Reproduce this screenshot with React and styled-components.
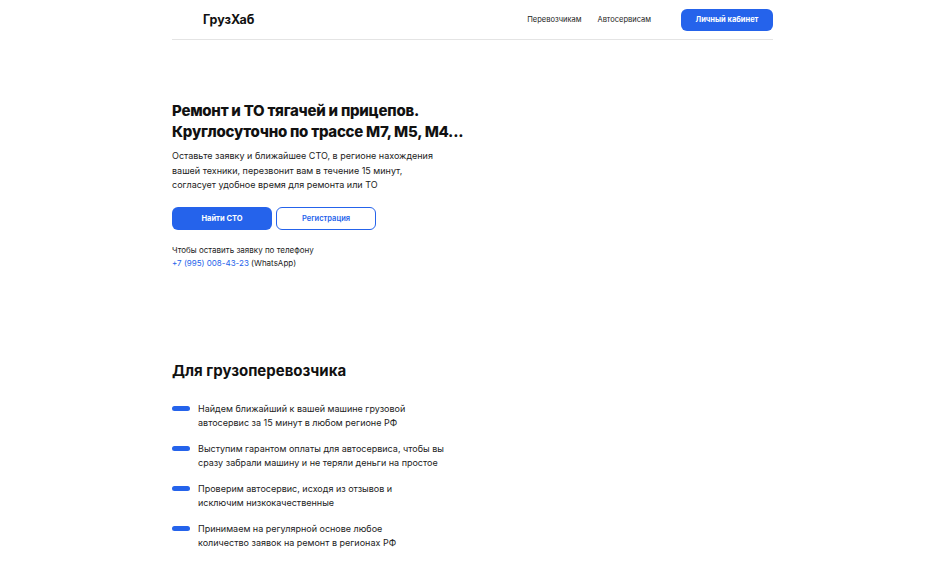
import styled, { createGlobalStyle } from 'styled-components';

const GlobalStyle = createGlobalStyle`
  * {
    box-sizing: border-box;
  }

  body {
    margin: 0;
    background: #fff;
    color: #111;
    font-family: Inter, "Noto Sans", sans-serif;
  }

  a {
    text-decoration: none;
  }
`;

const Page = styled.div`
  width: 601px;
  min-height: 1306px;
  margin-left: 172px;
`;

const Header = styled.header`
  height: 40px;
  display: flex;
  align-items: center;
  justify-content: space-between;
  border-bottom: 1px solid #e4e4e4;
`;

const Logo = styled.a`
  padding-left: 31px;
  font-weight: 700;
  font-size: 12.5px;
  color: #111;
`;

const Nav = styled.nav`
  display: flex;
  align-items: center;
`;

const NavLink = styled.a`
  margin-left: 16px;
  font-size: 7.5px;
  color: #222;
`;

const PrimaryButton = styled.a`
  display: flex;
  align-items: center;
  justify-content: center;
  width: ${({ $width }) => $width || 100}px;
  height: ${({ $height }) => $height || 23}px;
  margin-left: ${({ $offset }) => $offset || 0}px;
  border-radius: 6px;
  background: #2563eb;
  color: #fff;
  font-size: 7.5px;
  font-weight: 700;
`;

const OutlineButton = styled.a`
  display: flex;
  align-items: center;
  justify-content: center;
  width: 100px;
  height: 23px;
  border-radius: 6px;
  border: 1.5px solid #2563eb;
  color: #2563eb;
  font-size: 7.5px;
  font-weight: 600;
`;

const Hero = styled.section`
  padding-top: 60px;
`;

const Title = styled.h1`
  margin: 0;
  font-size: 15px;
  line-height: 21px;
  font-weight: 800;
  letter-spacing: -0.25px;
`;

const Lead = styled.p`
  margin: 7px 0 0;
  font-size: 9px;
  line-height: 14.5px;
  color: #222;
`;

const Actions = styled.div`
  display: flex;
  gap: 4px;
  margin-top: 14px;
`;

const Contact = styled.p`
  margin: 14px 0 0;
  font-size: 8px;
  line-height: 13px;
  color: #222;
`;

const Phone = styled.a`
  color: #2563eb;
`;

const Section = styled.section`
  padding-top: 91px;
`;

const SectionTitle = styled.h2`
  margin: 0;
  font-size: 15px;
  line-height: 20px;
  font-weight: 700;
`;

const List = styled.ul`
  list-style: none;
  margin: 21px 0 0;
  padding: 0;
  display: flex;
  flex-direction: column;
  gap: 12px;
`;

const Item = styled.li`
  display: flex;
  align-items: flex-start;
  gap: 8px;
  font-size: 9px;
  line-height: 14px;
  color: #222;
`;

const Dash = styled.span`
  flex: none;
  width: 18px;
  height: 5px;
  margin-top: 4.5px;
  border-radius: 3px;
  background: #2563eb;
`;

const carrierPoints = [
  ['Найдем ближайший к вашей машине грузовой', 'автосервис за 15 минут в любом регионе РФ'],
  ['Выступим гарантом оплаты для автосервиса, чтобы вы', 'сразу забрали машину и не теряли деньги на простое'],
  ['Проверим автосервис, исходя из отзывов и', 'исключим низкокачественные'],
  ['Принимаем на регулярной основе любое', 'количество заявок на ремонт в регионах РФ'],
];

const servicePoints = [
  ['Получайте новые заказы от грузоперевозчиков', 'каждый день в вашем регионе'],
  ['Гарантируем оплату выполненных работ', 'сразу после ремонта'],
  ['Бесплатное размещение вашего автосервиса', 'на платформе ГрузХаб'],
];

const PointList = ({ points }) => (
  <List>
    {points.map(([first, second]) => (
      <Item key={first}>
        <Dash />
        <span>
          {first}
          <br />
          {second}
        </span>
      </Item>
    ))}
  </List>
);

const App = () => {
  return (
    <>
      <GlobalStyle />
      <Page>
        <Header>
          <Logo href="#">ГрузХаб</Logo>
          <Nav>
            <NavLink href="#">Перевозчикам</NavLink>
            <NavLink href="#">Автосервисам</NavLink>
            <PrimaryButton href="#" $width={92} $height={22} $offset={30}>
              Личный кабинет
            </PrimaryButton>
          </Nav>
        </Header>

        <Hero>
          <Title>
            Ремонт и ТО тягачей и прицепов.
            <br />
            Круглосуточно по трассе М7, М5, М4...
          </Title>
          <Lead>
            Оставьте заявку и ближайшее СТО, в регионе нахождения
            <br />
            вашей техники, перезвонит вам в течение 15 минут,
            <br />
            согласует удобное время для ремонта или ТО
          </Lead>
          <Actions>
            <PrimaryButton href="#">Найти СТО</PrimaryButton>
            <OutlineButton href="#">Регистрация</OutlineButton>
          </Actions>
          <Contact>
            Чтобы оставить заявку по телефону
            <br />
            <Phone href="#">+7 (995) 008-43-23</Phone> (WhatsApp)
          </Contact>
        </Hero>

        <Section>
          <SectionTitle>Для грузоперевозчика</SectionTitle>
          <PointList points={carrierPoints} />
        </Section>

        <Section>
          <SectionTitle>Для автосервиса</SectionTitle>
          <PointList points={servicePoints} />
        </Section>
      </Page>
    </>
  );
};

export default App;
